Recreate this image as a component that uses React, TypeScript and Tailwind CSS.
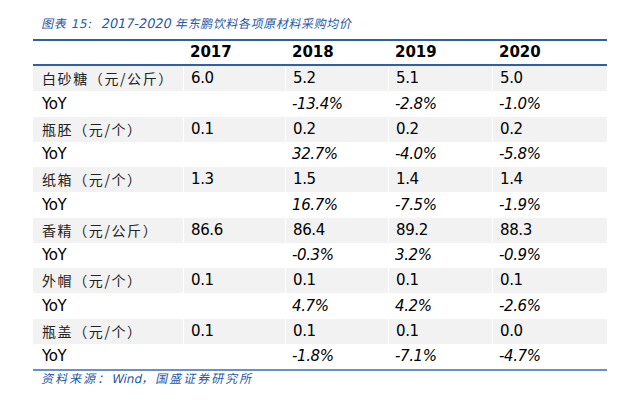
const rows: { label: string; v: string[]; yoy: string[] }[] = [
  { label: '白砂糖（元/公斤）', v: ['6.0', '5.2', '5.1', '5.0'], yoy: ['-13.4%', '-2.8%', '-1.0%'] },
  { label: '瓶胚（元/个）', v: ['0.1', '0.2', '0.2', '0.2'], yoy: ['32.7%', '-4.0%', '-5.8%'] },
  { label: '纸箱（元/个）', v: ['1.3', '1.5', '1.4', '1.4'], yoy: ['16.7%', '-7.5%', '-1.9%'] },
  { label: '香精（元/公斤）', v: ['86.6', '86.4', '89.2', '88.3'], yoy: ['-0.3%', '3.2%', '-0.9%'] },
  { label: '外帽（元/个）', v: ['0.1', '0.1', '0.1', '0.1'], yoy: ['4.7%', '4.2%', '-2.6%'] },
  { label: '瓶盖（元/个）', v: ['0.1', '0.1', '0.1', '0.0'], yoy: ['-1.8%', '-7.1%', '-4.7%'] },
]

const cols = 'grid grid-cols-[150px_102px_103px_104px_115px]'
const num = "font-['DejaVu_Sans',sans-serif] text-[15px] tracking-[-0.4px]"
const cjk = "font-['Noto_Sans_CJK_SC',sans-serif] text-[14px] tracking-[1.6px] text-[#222]"
// CJK glyphs don't get a synthetic oblique, so slant the whole line instead
const note = "block w-fit -skew-x-12 text-[#2757a6] font-['DejaVu_Sans','Noto_Sans_CJK_SC',sans-serif]"

export default function App() {
  return (
    <div className="w-[621px] h-[402px] bg-white text-black">
      <div className="pl-[42px] pt-[15px] h-[39px]">
        <div className={`text-[12px] leading-[18px] tracking-[0.6px] ${note}`}>
          图表 15:&nbsp; <span className="font-medium text-[13px] tracking-[-0.1px]">2017-2020</span> 年东鹏饮料各项原材料采购均价
        </div>
      </div>
      <div className="ml-[33px] w-[574px]">
        <div className={`${cols} h-[27px] border-t-[2px] border-b-[2px] border-[#2f5fa9] items-center font-bold text-[15px] font-['DejaVu_Sans',sans-serif]`}>
          <div />
          {['2017', '2018', '2019', '2020'].map((y) => (
            <div key={y} className="pl-[7px]">{y}</div>
          ))}
        </div>
        {rows.map((r) => (
          <div key={r.label}>
            <div className={`${cols} h-[25.25px] bg-[#f2f2f2] items-center`}>
              <div className={`pl-[9px] ${cjk}`}>{r.label}</div>
              {r.v.map((x, i) => (
                <div key={i} className={`h-full flex items-center pl-[7px] border-l border-white ${num}`}>{x}</div>
              ))}
            </div>
            <div className={`${cols} h-[25.25px] items-center`}>
              <div className={`pl-[9px] ${num}`}>YoY</div>
              <div />
              {r.yoy.map((x, i) => (
                <div key={i} className={`pl-[7px] italic ${num}`}>{x}</div>
              ))}
            </div>
          </div>
        ))}
        <div className="border-t-[2px] border-[#6b8fc9]" />
      </div>
      <div className="pl-[42px]">
        <div className={`text-[12px] leading-[16px] tracking-[2px] ${note}`}>
          资料来源：<span className="tracking-[0px]">Wind</span>，国盛证券研究所
        </div>
      </div>
    </div>
  )
}
